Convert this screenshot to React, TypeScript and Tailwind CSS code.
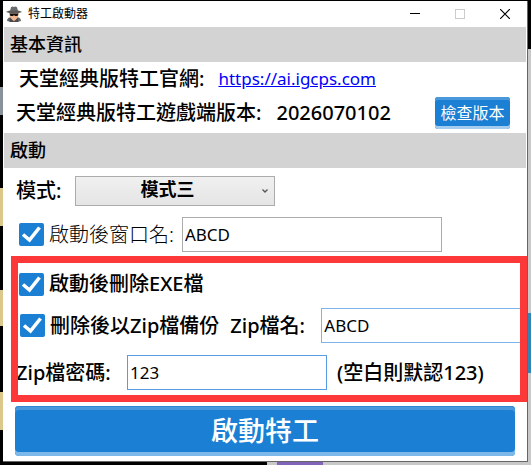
import React, { useState } from 'react';

type CheckFieldProps = {
  id: string;
  label: string;
  checked: boolean;
  onChange: (value: boolean) => void;
  className?: string;
};

function CheckField({ id, label, checked, onChange, className = 'font-medium' }: CheckFieldProps) {
  return (
    <div className="flex shrink-0 items-center gap-[5px]">
      <span className="grid h-[23px] w-[25px] shrink-0">
        <input
          id={id}
          type="checkbox"
          checked={checked}
          onChange={(e) => onChange(e.target.checked)}
          className="col-start-1 row-start-1 h-full w-full appearance-none rounded-[2px] bg-[#1b7fd4]"
        />
        {checked && (
          <svg viewBox="0 0 25 23" className="pointer-events-none col-start-1 row-start-1 h-full w-full" aria-hidden="true">
            <path d="M4 11.500 L10.500 17 L20.500 4.500" fill="none" stroke="#fff" strokeWidth="3.6" />
          </svg>
        )}
      </span>
      <label htmlFor={id} className={`whitespace-nowrap text-xl leading-6 ${className}`}>
        {label}
      </label>
    </div>
  );
}

function AgentIcon() {
  return (
    <svg viewBox="0 0 16 16" className="h-4 w-4" aria-hidden="true">
      <path d="M1 15 Q1 11.500 5 11 L11 11 Q15 11.500 15 15 L11 16 H5 Z" fill="#6b6b6b" />
      <path d="M3.500 6 H12.500 V9.500 Q11.500 14 8 15 Q4.500 14 3.500 9.500 Z" fill="#efb68f" />
      <path d="M4 11.500 L8 15.500 L12 11.500 L12.500 16 H3.500 Z" fill="#4a4a4a" />
      <path d="M5 11 H11 L8 14.500 Z" fill="#efb68f" />
      <path d="M3.500 7.500 H12.500 L11.500 10 H9 L8 8.900 L7 10 H4.500 Z" fill="#111" />
      <path d="M4 5 L5 1.300 Q6.500 0 8 1 Q9.500 0 11 1.300 L12 5 Z" fill="#6b6b6b" />
      <path d="M0 6 Q2 4.700 4 4.600 H12 Q14 4.700 16 6 Q12 7.600 8 7.600 Q4 7.600 0 6 Z" fill="#5a5a5a" />
    </svg>
  );
}

function TitleBar() {
  return (
    <header className="flex h-[26px] items-center pl-[2px]">
      <AgentIcon />
      <h1 className="ml-[6px] flex-1 text-xs">特工啟動器</h1>
      <button type="button" aria-label="最小化" className="grid h-full w-[45px] place-items-center">
        <svg viewBox="0 0 10 10" className="h-[10px] w-[10px]">
          <path d="M0 4.500 H10" stroke="#000" />
        </svg>
      </button>
      <button type="button" disabled aria-label="最大化" className="grid h-full w-[45px] place-items-center">
        <svg viewBox="0 0 10 10" className="h-[10px] w-[10px]">
          <rect x="0.500" y="0.500" width="9" height="9" fill="none" stroke="#ccc" />
        </svg>
      </button>
      <button type="button" aria-label="關閉" className="grid h-full w-[45px] place-items-center">
        <svg viewBox="0 0 10 10" className="h-[10px] w-[10px]">
          <path d="M0 0 L10 10 M10 0 L0 10" stroke="#000" strokeWidth="1.200" />
        </svg>
      </button>
    </header>
  );
}

function SectionTitle({ children }: { children: React.ReactNode }) {
  return (
    <h2 className="flex h-[35px] items-center bg-[#d3d3d3] pb-[2px] pl-[6px] text-lg font-medium">{children}</h2>
  );
}

export default function App() {
  const [renameWindow, setRenameWindow] = useState(true);
  const [deleteExe, setDeleteExe] = useState(true);
  const [backupZip, setBackupZip] = useState(true);

  return (
    <div className="grid min-h-screen grid-cols-[3px_minmax(0,1fr)_3px] grid-rows-[1fr_3px] bg-black pt-px font-['Noto_Sans','Noto_Sans_CJK_TC',sans-serif] text-black">
      {/* Desktop showing on the left */}
      <div className="flex flex-col">
        <div className="mt-[86px] h-7 bg-[#8a9299]" />
        <div className="mt-[73px] h-[38px] bg-[#dcc88a]" />
        <div className="mt-[64px] h-[36px] bg-[#dcc88a]" />
        <div className="mt-[66px] h-[38px] bg-[#dcc88a]" />
      </div>

      <div className="border-r border-b border-[#666] bg-white pl-px">
        <TitleBar />
        <main>
          <div className="pr-px">
            <SectionTitle>基本資訊</SectionTitle>
          </div>
          <div className="flex h-[71px] flex-col justify-center pb-[3px] text-xl leading-[34px] font-medium">
            <p className="flex items-center gap-[14px] pl-[15px] whitespace-nowrap">
              天堂經典版特工官網:
              <a href="https://ai.igcps.com" className="text-[17px] font-normal text-[#0000ff] underline">
                https://ai.igcps.com
              </a>
            </p>
            <div className="flex items-center pr-[17px] pl-3">
              <p className="flex flex-1 items-center gap-[15px] whitespace-nowrap">
                天堂經典版特工遊戲端版本:
                <span>2026070102</span>
              </p>
              <button
                type="button"
                className="h-8 w-[75px] rounded-[3px] bg-[#1b7fd4] text-base leading-6 font-normal whitespace-nowrap text-white shadow-[inset_0_3px_0_#4a98dc,inset_0_-3px_0_#a3ccee]"
              >
                檢查版本
              </button>
            </div>
          </div>

          <div className="pr-px">
            <SectionTitle>啟動</SectionTitle>
          </div>
          <div className="flex items-center gap-[14px] pt-2 pl-3">
            <label htmlFor="mode" className="text-xl leading-6 font-medium whitespace-nowrap">
              模式:
            </label>
            <div className="grid h-[30px] w-[200px] items-center">
              <select
                id="mode"
                defaultValue="3"
                className="col-start-1 row-start-1 h-full w-full appearance-none border border-[#acacac] bg-linear-to-b from-[#f0f0f0] to-[#e5e5e5] pr-4 pb-1 text-center text-lg leading-6 font-bold [text-align-last:center]"
              >
                <option value="1">模式一</option>
                <option value="2">模式二</option>
                <option value="3">模式三</option>
              </select>
              <svg viewBox="0 0 6 4" className="pointer-events-none col-start-1 row-start-1 mr-[7px] h-1 w-[6px] justify-self-end" aria-hidden="true">
                <path d="M0.500 0.500 L3 3 L5.500 0.500" fill="none" stroke="#555" strokeWidth="1.300" />
              </svg>
            </div>
          </div>

          <div className="flex items-center gap-2 pt-[11px] pl-[15px]">
            <CheckField
              id="rename"
              label="啟動後窗口名:"
              checked={renameWindow}
              onChange={setRenameWindow}
              className="font-light"
            />
            <input
              aria-label="啟動後窗口名"
              type="text"
              defaultValue="ABCD"
              className="h-[35px] w-[260px] border border-[#acacac] px-[2px] text-[17px]"
            />
          </div>

          {/* Highlighted delete / backup options */}
          <section className="relative mt-1 ml-[7px] flex flex-col gap-3 pt-4 pb-3">
            <div className="flex h-6 items-center pl-2">
              <CheckField id="delete-exe" label="啟動後刪除EXE檔" checked={deleteExe} onChange={setDeleteExe} />
            </div>
            <div className="flex items-center pl-[9px]">
              <CheckField id="backup-zip" label="刪除後以Zip檔備份" checked={backupZip} onChange={setBackupZip} />
              <label htmlFor="zip-name" className="ml-[11px] w-[91px] shrink-0 text-xl leading-6 font-medium whitespace-nowrap">
                Zip檔名:
              </label>
              <input
                id="zip-name"
                type="text"
                defaultValue="ABCD"
                className="h-[35px] min-w-0 flex-1 border border-[#7eb4ea] px-[2px] text-[17px]"
              />
            </div>
            <div className="flex items-center pl-[5px] text-xl leading-6 font-medium">
              <label htmlFor="zip-password" className="w-[111px] shrink-0 whitespace-nowrap">
                Zip檔密碼:
              </label>
              <input
                id="zip-password"
                type="text"
                defaultValue="123"
                className="h-[35px] w-[200px] border border-[#569de5] px-[2px] text-[17px] font-normal"
              />
              <span className="ml-[10px] whitespace-nowrap">(空白則默認123)</span>
            </div>
            <div className="pointer-events-none absolute inset-0 border-[7px] border-[#fd3838]" />
          </section>

          <div className="pt-1 pr-3 pb-1 pl-[11px]">
            <button
              type="button"
              className="h-[50px] w-full rounded-[4px] bg-[#1b7fd4] text-[27px] leading-9 font-medium text-white shadow-[inset_0_1px_0_#2f86d2,inset_0_4px_0_#4a98dc,inset_0_-4px_0_#7db8ea]"
            >
              啟動特工
            </button>
          </div>
        </main>
      </div>

      {/* Desktop showing on the right */}
      <div className="mt-12 bg-[#c8c8c8] pt-[264px]">
        <div className="h-[60px] bg-[#2f86b5]" />
      </div>

      <div className="col-span-3 ml-[267px] flex bg-[#c8c8c8] pl-[10px]">
        <div className="w-[46px] bg-[#8064b8]" />
      </div>
    </div>
  );
}
